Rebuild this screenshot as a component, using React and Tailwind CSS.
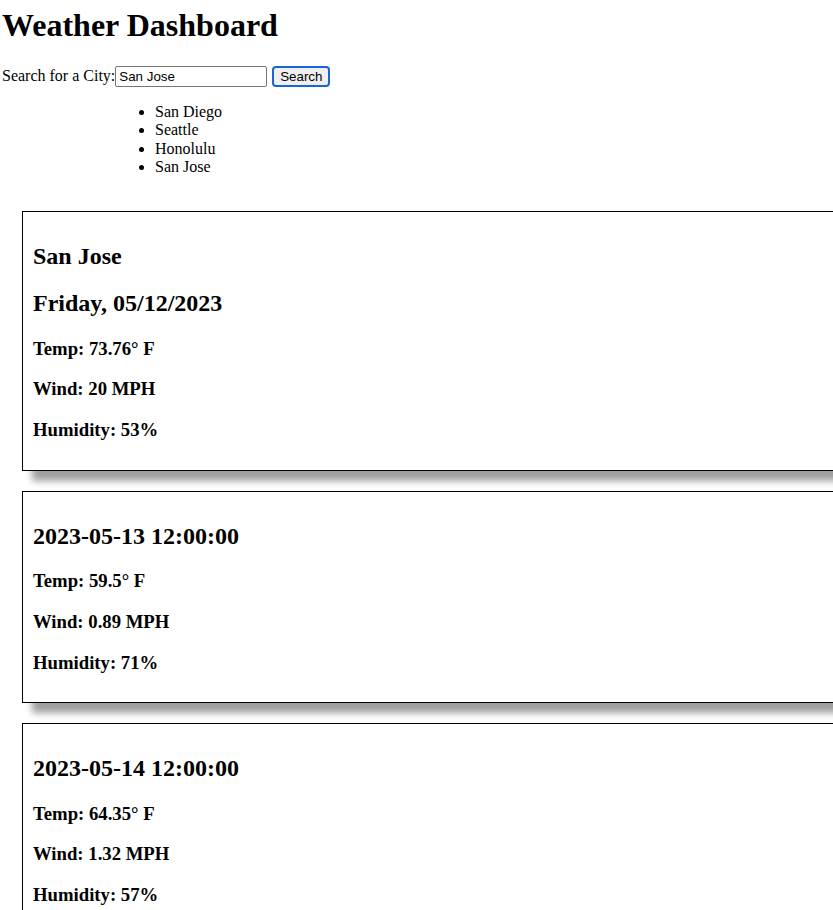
import { useState } from 'react';

// Weather data shown on the dashboard
const history = ['San Diego', 'Seattle', 'Honolulu', 'San Jose'];

const current = {
  city: 'San Jose',
  date: 'Friday, 05/12/2023',
  temp: '73.76',
  wind: '20',
  humidity: '53',
};

const forecast = [
  { date: '2023-05-13 12:00:00', temp: '59.5', wind: '0.89', humidity: '71' },
  { date: '2023-05-14 12:00:00', temp: '64.35', wind: '1.32', humidity: '57' },
];

function Stats({ temp, wind, humidity }) {
  return (
    <>
      <h3 className="my-[18.72px] text-[18.72px] font-bold leading-[22px]">Temp: {temp}° F</h3>
      <h3 className="my-[18.72px] text-[18.72px] font-bold leading-[22px]">Wind: {wind} MPH</h3>
      <h3 className="my-[18.72px] text-[18.72px] font-bold leading-[22px]">Humidity: {humidity}%</h3>
    </>
  );
}

function Card({ children }) {
  return (
    <div className="ml-[22px] w-[900px] border border-black px-[10px] pt-[11px] pb-[10px] shadow-[10px_10px_7px_#a0a0a0]">
      {children}
    </div>
  );
}

export default function App() {
  const [city, setCity] = useState('San Jose');

  return (
    <div className="min-h-[910px] overflow-x-hidden bg-white pb-10 font-['Liberation_Serif',serif] text-[16px] leading-[18.4px] text-black">
      <h1 className="mt-[7px] mb-[22px] pl-[2px] text-[32px] font-bold leading-[37px]">Weather Dashboard</h1>

      <form className="flex items-baseline pl-[2px]" onSubmit={(e) => e.preventDefault()}>
        <label htmlFor="city">Search for a City:</label>
        <input
          id="city"
          value={city}
          onChange={(e) => setCity(e.target.value)}
          className="h-[21px] w-[152px] rounded-[2px] border border-[#767676] px-[3px] font-['Liberation_Sans',sans-serif] text-[13.33px] leading-[17px] outline-none"
        />
        <button
          type="submit"
          className="ml-[5px] h-[21px] w-[58px] rounded-[4px] border-2 border-[#1c64d6] bg-[#efefef] font-['Liberation_Sans',sans-serif] text-[13.33px] leading-[15px]"
        >
          Search
        </button>
      </form>

      <ul className="mt-[16px] ml-[115px] list-disc pl-10">
        {history.map((name) => (
          <li key={name}>{name}</li>
        ))}
      </ul>

      <div className="mt-[34px] flex flex-col gap-5">
        <Card>
          <h2 className="my-[19.92px] text-[24px] font-bold leading-[27.6px]">{current.city}</h2>
          <h2 className="my-[19.92px] text-[24px] font-bold leading-[27.6px]">{current.date}</h2>
          <Stats temp={current.temp} wind={current.wind} humidity={current.humidity} />
        </Card>
        {forecast.map((day) => (
          <Card key={day.date}>
            <h2 className="my-[19.92px] text-[24px] font-bold leading-[27.6px]">{day.date}</h2>
            <Stats temp={day.temp} wind={day.wind} humidity={day.humidity} />
          </Card>
        ))}
      </div>
    </div>
  );
}
